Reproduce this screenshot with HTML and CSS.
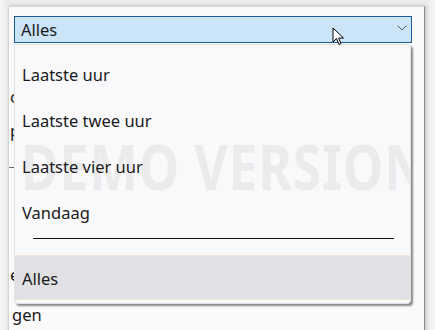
FILE: index.html
```html
<!DOCTYPE html>
<html>
<head>
<meta charset="utf-8">
<link rel="stylesheet" href="styles.css">
</head>
<body>
<div class="window">
  <div class="combo">
    <span class="combo-text">Alles</span>
    <svg class="chevron" width="10" height="6" viewBox="0 0 10 6"><polyline points="0.5,0.5 5,5 9.5,0.5" fill="none" stroke="#5a5a5a" stroke-width="1"/></svg>
  </div>
  <div class="bg">
    <div class="frag f1">co</div>
    <div class="frag f2">pe</div>
    <div class="rule"></div>
    <div class="frag f3">ee</div>
    <div class="frag f4">gen</div>
  </div>

  <div class="popup">
    <div class="watermark">DEMO VERSION</div>
    <div class="item">Laatste uur</div>
    <div class="item">Laatste twee uur</div>
    <div class="item">Laatste vier uur</div>
    <div class="item">Vandaag</div>
    <div class="sep"><div class="sep-line"></div></div>
    <div class="item selected">Alles</div>
  </div>

  <svg class="cursor" width="14" height="20" viewBox="0 0 14 20"><path d="M1 1 L1 15 L4.5 11.5 L7 17.5 L9 16.6 L6.6 11 L11.5 11 Z" fill="#fff" stroke="#000" stroke-width="1" stroke-linejoin="miter"/></svg>
</div>
</body>
</html>
```
FILE: styles.css
```css
html, body {
  margin: 0;
  padding: 0;
}
body {
  width: 435px;
  height: 330px;
  overflow: hidden;
  background: linear-gradient(to right, #f6f6f6 0, #ececec 8px, #ececec 426px, #f4f4f4 435px);
  font-family: "Noto Sans", "Open Sans", sans-serif;
  color: #1b1b1b;
}
.window {
  position: relative;
  margin: 6px 0 0 8px;
  width: 417px;
  height: 330px;
  background: #fafafa;
  border-left: 1px solid #d6d6d6;
  border-top: 1px solid #d8d8d8;
  border-right: 1px solid #8c8c8c;
  box-shadow: 2px 0 3px rgba(0,0,0,0.12), 0 -2px 4px rgba(0,0,0,0.06);
  box-sizing: border-box;
  padding: 9px 12px 0 5px;
}
.combo {
  height: 27px;
  box-sizing: border-box;
  border: 1px solid #1c5b99;
  background: #cce4f7;
  display: flex;
  align-items: center;
  justify-content: space-between;
  padding: 0 4px 0 6px;
}
.combo-text {
  font-size: 16.5px;
  line-height: 20px;
}
.chevron {
  display: block;
  margin-top: -3px;
}
.bg {
  display: flex;
  flex-direction: column;
  margin-left: -4px;
  font-size: 16.5px;
}
.frag {
  line-height: 20px;
  height: 20px;
  white-space: nowrap;
}
.f1 { margin-top: 44px; }
.f2 { margin-top: 14px; }
.rule {
  margin-top: 26px;
  margin-left: -1px;
  width: 60px;
  height: 1px;
  background: #6a6a6a;
}
.f3 { margin-top: 97px; }
.f4 { margin-top: 20px; margin-left: 2px; }

.popup {
  position: absolute;
  left: 5px;
  top: 37px;
  width: 397px;
  height: 260px;
  box-sizing: border-box;
  background: #f9f9fb;
  border: 1px solid #e2e2e6;
  border-radius: 0 4px 4px 4px;
  box-shadow: 2px 2px 2px rgba(0,0,0,0.45);
  padding-top: 6px;
  display: flex;
  flex-direction: column;
  overflow: hidden;
}
.watermark {
  position: absolute;
  left: 6px;
  top: 90px;
  font-family: "Noto Sans", sans-serif;
  font-weight: 700;
  font-size: 62px;
  line-height: 62px;
  color: #ebebee;
  white-space: nowrap;
  transform: scaleX(0.83);
  transform-origin: left top;
  letter-spacing: 1px;
}
.item {
  position: relative;
  height: 46px;
  display: flex;
  align-items: center;
  padding-left: 7px;
  font-size: 16.5px;
}
.sep {
  height: 20px;
  padding: 3px 16px 0 18px;
  box-sizing: border-box;
}
.sep-line {
  height: 1px;
  background: #111;
}
.item.selected {
  height: 45px;
  background: #e1e0e5;
  border-top: 1px solid #f1e6d9;
  border-bottom: 1px solid #f1e6d9;
  box-sizing: border-box;
  padding-top: 2px;
}
.cursor {
  position: absolute;
  left: 323px;
  top: 20px;
}
```
